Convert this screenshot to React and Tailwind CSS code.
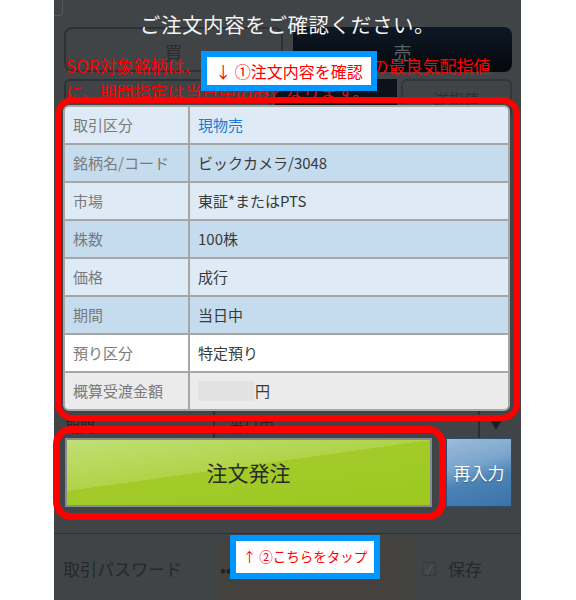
import React from 'react';

const rows = [
  { label: '取引区分', value: '現物売', bg: 'bg-[#deebf6]', tone: 'text-[#1d78d6]' },
  { label: '銘柄名/コード', value: 'ビックカメラ/3048', bg: 'bg-[#c5dbee]', tone: 'text-[#3a3a3a]' },
  { label: '市場', value: '東証*またはPTS', bg: 'bg-[#deebf6]', tone: 'text-[#3a3a3a]' },
  { label: '株数', value: '100株', bg: 'bg-[#c5dbee]', tone: 'text-[#3a3a3a]' },
  { label: '価格', value: '成行', bg: 'bg-[#deebf6]', tone: 'text-[#3a3a3a]' },
  { label: '期間', value: '当日中', bg: 'bg-[#c5dbee]', tone: 'text-[#3a3a3a]' },
  { label: '預り区分', value: '特定預り', bg: 'bg-white', tone: 'text-[#3a3a3a]' },
  { label: '概算受渡金額', value: null, bg: 'bg-[#ebebeb]', tone: 'text-[#3a3a3a]' },
];

const App = () => {
  return (
    <div className="relative h-[600px] w-[576px] overflow-hidden bg-white font-['Noto_Sans_CJK_JP',sans-serif]">
      <div className="relative ml-[54px] h-[600px] w-[467px] overflow-hidden bg-[#404447]">
        {/* order form under the dialog */}
        <div className="h-[16px] w-[9px] rounded-br-[4px] border-b border-r border-[#56595c]" />
        <div className="mt-[11px] grid grid-cols-2 gap-[10px] pl-[10px] pr-[9px]">
          <div className="flex h-[45px] items-center justify-center rounded-[8px] border-2 border-[#2f3235] pt-[4px] text-[18px] leading-none text-[#2b2d2f]">買</div>
          <div className="flex h-[45px] items-center justify-center rounded-[8px] bg-[linear-gradient(180deg,#0e1824,#05080d)] pt-[4px] text-[18px] leading-none text-[#5d6165]">売</div>
        </div>
        <div className="mt-[7px] flex h-[40px] gap-[4px] pl-[10px] pr-[9px]">
          <div className="w-[207px] rounded-[6px] border-2 border-[#2f3235]" />
          <div className="flex-1 bg-[#0b121b]" />
          <div className="flex w-[111px] items-center justify-center rounded-[6px] border-2 border-[#34373a] text-[15px] text-[#2b2d2f]">逆指値</div>
        </div>
        <div className="mt-[290px] flex h-[50px] pl-[11px] pr-[9px] text-[15px] text-[#232527]">
          <div className="w-[148px] pt-[6px]">期間</div>
          <div className="flex flex-1 border-l-2 border-[#2c2f32]">
            <div className="flex-1 pl-[14px] pt-[6px]">当日中</div>
            <div className="flex w-[34px] justify-center border-l-2 border-[#2c2f32] pt-[8px] text-[11px] text-[#1c1e20]">▼</div>
          </div>
        </div>
        <div className="mt-[74px] border-t border-[#2f3235]" />
        <div className="flex h-[66px] items-center pl-[9px] pt-[4px] text-[17px] text-[#26282a]">
          <div className="w-[155px]">取引パスワード</div>
          <div className="flex h-full w-[195px] items-center bg-[#43423f] pl-[2px] text-[#1f2123]">••</div>
          <div className="ml-[9px] flex h-[14px] w-[14px] items-center justify-center rounded-[2px] border border-[#35383b] text-[11px] text-[#55585b]">✓</div>
          <div className="ml-[12px]">保存</div>
        </div>

        {/* red note on the form */}
        <div className="absolute left-[12px] top-[53px] whitespace-nowrap text-[17px] leading-[26px] text-[#ff0000]">
          <div>SOR対象銘柄は、成行または指定価格での最良気配指値</div>
          <div>に、期間指定は当日中のみとなります。</div>
        </div>

        {/* confirmation dialog */}
        <div className="absolute inset-0">
          <div className="pt-[10px] text-center text-[20.5px] leading-[28px] tracking-[0.6px] text-[#f3f3f3]">ご注文内容をご確認ください。</div>
          <div className="ml-[9px] mt-[67px] flex w-[447px] flex-col gap-[2px] overflow-hidden rounded-[6px] border-2 border-[#a6a6a6] bg-[#a6a6a6]">
            {rows.map((r) => (
              <div key={r.label} className="grid h-[36px] grid-cols-[123px_1fr] gap-x-[2px] text-[15px]">
                <div className={`${r.bg} flex items-center pl-[8px] text-[#7a7a7a]`}>{r.label}</div>
                <div className={`${r.bg} ${r.tone} flex items-center pl-[8px]`}>
                  {r.value ?? (
                    <>
                      <span className="h-[20px] w-[56px] bg-[#e2e2e2]" />
                      <span className="ml-[1px]">円</span>
                    </>
                  )}
                </div>
              </div>
            ))}
          </div>
          <div className="ml-[11px] mt-[27px] flex h-[69px] w-[447px] gap-[14px]">
            <button className="flex w-[367px] items-center justify-center border-2 border-[#868b8f] bg-[linear-gradient(172deg,#c2df74_0%,#b0d349_44%,#a2cb2a_44%,#9cc81f_100%)] text-[21px] text-[#2a2a2a]">注文発注</button>
            <button className="flex w-[66px] items-center justify-center border border-[#2b4e6f] bg-[linear-gradient(165deg,#9dbcd8_0%,#7aa5cc_38%,#4b83b7_60%,#3b73a8_100%)] text-[17px] text-white [text-shadow:0_1px_1px_rgba(0,0,0,0.35)]">再入力</button>
          </div>
        </div>
      </div>

      {/* annotations */}
      <div className="absolute left-[55px] top-[97px] h-[324px] w-[465px] rounded-[18px] border-[6px] border-[#ff0000]" />
      <div className="absolute left-[53px] top-[426px] h-[94px] w-[393px] rounded-[18px] border-[7px] border-[#ff0000]" />
      <div className="absolute left-[201px] top-[51px] flex h-[40px] w-[176px] items-center justify-center border-[6px] border-[#0096ff] bg-white text-[16px] leading-none text-[#ff0000]">↓ ①注文内容を確認</div>
      <div className="absolute left-[230px] top-[535px] flex h-[44px] w-[150px] items-center justify-center border-[6px] border-[#0096ff] bg-white text-[13.5px] leading-none text-[#ff0000]">↑ ②こちらをタップ</div>
    </div>
  );
};

export default App;
